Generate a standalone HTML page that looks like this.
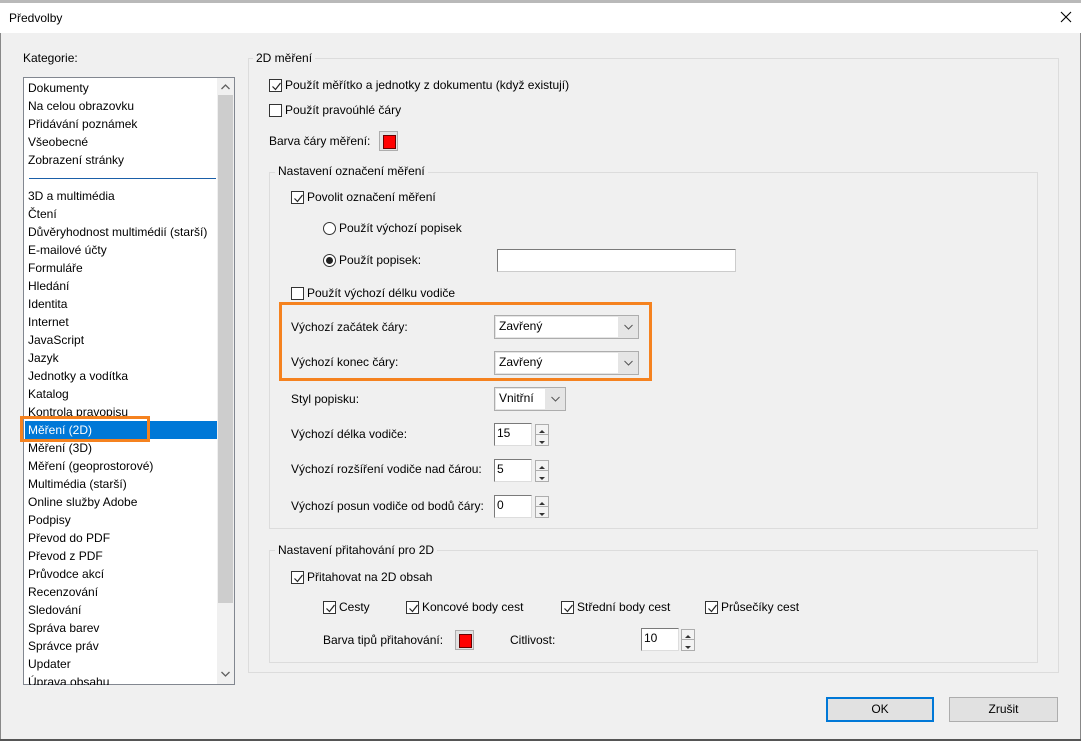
<!DOCTYPE html>
<html><head><meta charset="utf-8"><style>
*{box-sizing:border-box;margin:0;padding:0}
body{width:1081px;height:741px;overflow:hidden;background:#f0f0f0;font-family:"Liberation Sans","DejaVu Sans",sans-serif;font-size:12px;color:#000;position:relative}
.a{position:absolute}
.t{position:absolute;line-height:14px;white-space:nowrap}
.cb{position:absolute;width:13px;height:13px;border:1px solid #333;background:#fff}
.cb svg{position:absolute;left:1px;top:1px}
.rd{position:absolute;width:13px;height:13px;border:1px solid #333;border-radius:50%;background:#fff}
.rd.on::after{content:"";position:absolute;left:2px;top:2px;width:7px;height:7px;border-radius:50%;background:#222}
.grp{position:absolute;border:1px solid #dcdcdc}
.leg{position:absolute;background:#f0f0f0;padding:0 3px;line-height:14px}
.combo{position:absolute;border:1px solid #adadad;background:#e5e5e5}
.combo .in{position:absolute;left:1px;top:1px;bottom:1px;background:#fff;padding-left:3px;line-height:19px}
.combo svg{position:absolute;right:5px;top:8px}
.inp{position:absolute;background:#fff;border:1px solid #7a7a7a;border-right-color:#ddd;border-bottom-color:#ddd;padding-left:2px;line-height:19px}
.spin{position:absolute;width:14px;border:1px solid #adadad;background:#f3f3f3}
.spin div{height:50%;border-bottom:1px solid #adadad;position:relative}
.spin div:last-child{border-bottom:none}
.sw{position:absolute;width:19px;height:20px;border:1px solid #adadad;background:#e1e1e1}
.sw::after{content:"";position:absolute;left:3px;top:3px;width:11px;height:12px;background:#f00;border:1px solid #600}
.li{position:absolute;left:28px;line-height:14px;white-space:nowrap}
.btn{position:absolute;height:25px;background:#e1e1e1;border:1px solid #adadad;text-align:center;line-height:23px}
</style></head><body>
<div class="a" style="left:0;top:0;width:1081px;height:3px;background:#b9b9b9"></div>
<div class="a" style="left:0;top:3px;width:1081px;height:30px;background:#fff"></div>
<div class="t" style="left:9px;top:11px">Předvolby</div>
<svg class="a" style="left:1060px;top:11px" width="12" height="12"><path d="M1 1L11 11M11 1L1 11" stroke="#000" stroke-width="1.1"/></svg>
<div class="a" style="left:0;top:33px;width:1px;height:708px;background:#888"></div>
<div class="a" style="left:1080px;top:33px;width:1px;height:708px;background:#888"></div>
<div class="a" style="left:0;top:739px;width:1081px;height:2px;background:#555"></div>

<div class="t" style="left:23px;top:51px">Kategorie:</div>
<div class="a" style="left:23px;top:77px;width:212px;height:608px;background:#fff;border:1px solid #828790;overflow:hidden">
<div class="a" style="left:193px;top:0;width:17px;height:606px;background:#f0f0f0"></div>
<div class="a" style="left:194px;top:17px;width:15px;height:508px;background:#cdcdcd"></div>
<svg class="a" style="left:197px;top:6px" width="9" height="6"><path d="M0.5 5L4.5 1L8.5 5" stroke="#606060" fill="none" stroke-width="1.3"/></svg>
<svg class="a" style="left:197px;top:593px" width="9" height="6"><path d="M0.5 1L4.5 5L8.5 1" stroke="#606060" fill="none" stroke-width="1.3"/></svg>
<div class="a" style="left:5px;top:100px;width:187px;height:1px;background:#1a5fa8"></div>
<div class="a" style="left:1px;top:343px;width:192px;height:18px;background:#0078d7"></div>
</div>
<div style="position:absolute;left:0;top:0;width:216px;height:685px;overflow:hidden">
<div class="li" style="top:81px">Dokumenty</div>
<div class="li" style="top:99px">Na celou obrazovku</div>
<div class="li" style="top:117px">Přidávání poznámek</div>
<div class="li" style="top:135px">Všeobecné</div>
<div class="li" style="top:153px">Zobrazení stránky</div>
<div class="li" style="top:189px">3D a multimédia</div>
<div class="li" style="top:207px">Čtení</div>
<div class="li" style="top:225px">Důvěryhodnost multimédií (starší)</div>
<div class="li" style="top:243px">E-mailové účty</div>
<div class="li" style="top:261px">Formuláře</div>
<div class="li" style="top:279px">Hledání</div>
<div class="li" style="top:297px">Identita</div>
<div class="li" style="top:315px">Internet</div>
<div class="li" style="top:333px">JavaScript</div>
<div class="li" style="top:351px">Jazyk</div>
<div class="li" style="top:369px">Jednotky a vodítka</div>
<div class="li" style="top:387px">Katalog</div>
<div class="li" style="top:405px">Kontrola pravopisu</div>
<div class="li" style="top:423px;color:#fff">Měření (2D)</div>
<div class="li" style="top:441px">Měření (3D)</div>
<div class="li" style="top:459px">Měření (geoprostorové)</div>
<div class="li" style="top:477px">Multimédia (starší)</div>
<div class="li" style="top:495px">Online služby Adobe</div>
<div class="li" style="top:513px">Podpisy</div>
<div class="li" style="top:531px">Převod do PDF</div>
<div class="li" style="top:549px">Převod z PDF</div>
<div class="li" style="top:567px">Průvodce akcí</div>
<div class="li" style="top:585px">Recenzování</div>
<div class="li" style="top:603px">Sledování</div>
<div class="li" style="top:621px">Správa barev</div>
<div class="li" style="top:639px">Správce práv</div>
<div class="li" style="top:657px">Updater</div>
<div class="li" style="top:675px">Úprava obsahu</div>
</div>
<div class="a" style="left:20px;top:416px;width:130px;height:26px;border:3px solid #f5821f"></div>

<div class="grp" style="left:248px;top:58px;width:811px;height:615px"></div>
<div class="leg" style="left:253px;top:51px">2D měření</div>

<div class="cb" style="left:269px;top:79px"><svg width="11" height="11"><path d="M1.5 5.5L4.5 8.5L9.5 2" stroke="#222" fill="none" stroke-width="1.2"/></svg></div>
<div class="t" style="left:285px;top:78px">Použít měřítko a jednotky z dokumentu (když existují)</div>
<div class="cb" style="left:269px;top:104px"></div>
<div class="t" style="left:285px;top:103px">Použít pravoúhlé čáry</div>
<div class="t" style="left:269px;top:134px">Barva čáry měření:</div>
<div class="sw" style="left:379px;top:131px"></div>

<div class="grp" style="left:269px;top:172px;width:769px;height:357px"></div>
<div class="leg" style="left:275px;top:164px">Nastavení označení měření</div>
<div class="cb" style="left:291px;top:191px"><svg width="11" height="11"><path d="M1.5 5.5L4.5 8.5L9.5 2" stroke="#222" fill="none" stroke-width="1.2"/></svg></div>
<div class="t" style="left:307px;top:190px">Povolit označení měření</div>
<div class="rd" style="left:323px;top:222px"></div>
<div class="t" style="left:339px;top:221px">Použít výchozí popisek</div>
<div class="rd on" style="left:323px;top:254px"></div>
<div class="t" style="left:339px;top:253px">Použít popisek:</div>
<div class="a" style="left:497px;top:249px;width:239px;height:23px;background:#fff;border:1px solid #7a7a7a;border-right-color:#ccc;border-bottom-color:#ccc"></div>
<div class="cb" style="left:291px;top:287px"></div>
<div class="t" style="left:307px;top:286px">Použít výchozí délku vodiče</div>

<div class="a" style="left:279px;top:302px;width:373px;height:79px;border:3px solid #f5821f"></div>
<div class="t" style="left:291px;top:320px">Výchozí začátek čáry:</div>
<div class="combo" style="left:494px;top:315px;width:145px;height:24px"><div class="in" style="right:20px">Zavřený</div><svg width="9" height="6"><path d="M0.5 1L4.5 5L8.5 1" stroke="#555" fill="none"/></svg></div>
<div class="t" style="left:291px;top:355px">Výchozí konec čáry:</div>
<div class="combo" style="left:494px;top:351px;width:145px;height:24px"><div class="in" style="right:20px">Zavřený</div><svg width="9" height="6"><path d="M0.5 1L4.5 5L8.5 1" stroke="#555" fill="none"/></svg></div>

<div class="t" style="left:291px;top:392px">Styl popisku:</div>
<div class="combo" style="left:494px;top:387px;width:72px;height:24px"><div class="in" style="right:20px">Vnitřní</div><svg width="9" height="6"><path d="M0.5 1L4.5 5L8.5 1" stroke="#555" fill="none"/></svg></div>

<div class="t" style="left:291px;top:427px">Výchozí délka vodiče:</div>
<div class="inp" style="left:494px;top:423px;width:38px;height:23px">15</div>
<div class="spin" style="left:535px;top:424px;height:22px"><div></div><div></div></div>
<div class="t" style="left:291px;top:462px">Výchozí rozšíření vodiče nad čárou:</div>
<div class="inp" style="left:494px;top:459px;width:38px;height:23px">5</div>
<div class="spin" style="left:535px;top:460px;height:22px"><div></div><div></div></div>
<div class="t" style="left:291px;top:499px">Výchozí posun vodiče od bodů čáry:</div>
<div class="inp" style="left:494px;top:495px;width:38px;height:23px">0</div>
<div class="spin" style="left:535px;top:496px;height:22px"><div></div><div></div></div>
<svg class="a" style="left:537px;top:428px" width="10" height="90"><g fill="#333"><path d="M2 5L5 2L8 5Z"/><path d="M2 13L5 16L8 13Z"/><path d="M2 41L5 38L8 41Z"/><path d="M2 49L5 52L8 49Z"/><path d="M2 77L5 74L8 77Z"/><path d="M2 85L5 88L8 85Z"/></g></svg>

<div class="grp" style="left:269px;top:550px;width:769px;height:113px"></div>
<div class="leg" style="left:275px;top:543px">Nastavení přitahování pro 2D</div>
<div class="cb" style="left:291px;top:571px"><svg width="11" height="11"><path d="M1.5 5.5L4.5 8.5L9.5 2" stroke="#222" fill="none" stroke-width="1.2"/></svg></div>
<div class="t" style="left:307px;top:570px">Přitahovat na 2D obsah</div>
<div class="cb" style="left:323px;top:601px"><svg width="11" height="11"><path d="M1.5 5.5L4.5 8.5L9.5 2" stroke="#222" fill="none" stroke-width="1.2"/></svg></div>
<div class="t" style="left:339px;top:600px">Cesty</div>
<div class="cb" style="left:406px;top:601px"><svg width="11" height="11"><path d="M1.5 5.5L4.5 8.5L9.5 2" stroke="#222" fill="none" stroke-width="1.2"/></svg></div>
<div class="t" style="left:422px;top:600px">Koncové body cest</div>
<div class="cb" style="left:561px;top:601px"><svg width="11" height="11"><path d="M1.5 5.5L4.5 8.5L9.5 2" stroke="#222" fill="none" stroke-width="1.2"/></svg></div>
<div class="t" style="left:577px;top:600px">Střední body cest</div>
<div class="cb" style="left:705px;top:601px"><svg width="11" height="11"><path d="M1.5 5.5L4.5 8.5L9.5 2" stroke="#222" fill="none" stroke-width="1.2"/></svg></div>
<div class="t" style="left:721px;top:600px">Průsečíky cest</div>
<div class="t" style="left:323px;top:633px">Barva tipů přitahování:</div>
<div class="sw" style="left:455px;top:630px"></div>
<div class="t" style="left:510px;top:633px">Citlivost:</div>
<div class="inp" style="left:641px;top:628px;width:38px;height:23px">10</div>
<div class="spin" style="left:681px;top:629px;height:22px"><div></div><div></div></div>
<svg class="a" style="left:683px;top:633px" width="10" height="20"><g fill="#333"><path d="M2 5L5 2L8 5Z"/><path d="M2 13L5 16L8 13Z"/></g></svg>

<div class="btn" style="left:826px;top:697px;width:108px;border:2px solid #0078d7;line-height:21px">OK</div>
<div class="btn" style="left:949px;top:697px;width:109px">Zrušit</div>
</body></html>
